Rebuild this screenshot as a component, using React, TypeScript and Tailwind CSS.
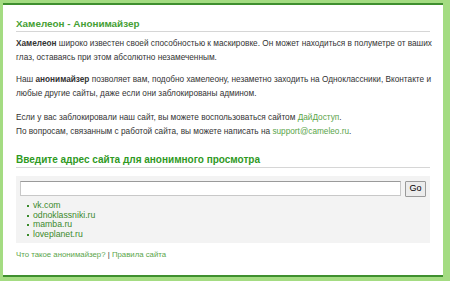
import React from "react";

export default function App() {
  const f = { fontFamily: '"Liberation Sans", Arial, sans-serif' };
  return (
    <div className="w-[450px] h-[281px] bg-[#a4dc82] pt-[3px] pl-[3px] overflow-hidden" style={f}>
      <div className="w-[440px] h-[274px] bg-white border-t-2 border-b-2 border-[#3f8f2f] px-[13px] pt-[12px] text-[#333]">
        <div className="text-[9.9px] leading-[14px] font-bold text-[#45a034] border-b border-[#d6d6d6] whitespace-nowrap">
          Хамелеон - Анонимайзер
        </div>
        <div className="mt-[5px] text-[8.25px] leading-[14px] whitespace-nowrap">
          <div><b>Хамелеон</b> широко известен своей способностью к маскировке. Он может находиться в полуметре от ваших</div>
          <div>глаз, оставаясь при этом абсолютно незамеченным.</div>
        </div>
        <div className="mt-[8px] text-[8.25px] leading-[14px] whitespace-nowrap">
          <div>Наш <b>анонимайзер</b> позволяет вам, подобно хамелеону, незаметно заходить на Одноклассники, Вконтакте и</div>
          <div>любые другие сайты, даже если они заблокированы админом.</div>
        </div>
        <div className="mt-[10px] text-[8.25px] leading-[14px] whitespace-nowrap">
          <div>Если у вас заблокировали наш сайт, вы можете воспользоваться сайтом <span className="text-[#5aa54a]">ДайДоступ</span>.</div>
          <div>По вопросам, связанным с работой сайта, вы можете написать на <span className="text-[#5aa54a]">support@cameleo.ru</span>.</div>
        </div>
        <div className="mt-[14px] text-[10px] leading-[14px] font-bold text-[#2f9a1f] border-b border-[#d6d6d6] whitespace-nowrap">
          Введите адрес сайта для анонимного просмотра
        </div>
        <div className="mt-[8px] bg-[#f3f3f3] px-[4px] pt-[5px] pb-[3px]">
          <div className="flex items-start gap-[4px]">
            <div className="w-[381px] h-[15px] bg-white border border-[#c8c8c8] border-t-[#9a9a9a]"></div>
            <div className="w-[21px] h-[16px] bg-[#ececec] border border-[#9a9a9a] rounded-[1px] flex items-center justify-center text-[9px] text-black">
              Go
            </div>
          </div>
          <ul className="mt-[4px] pl-[7px] text-[8.7px] leading-[9.7px] font-medium text-[#3b8a2b]">
            {["vk.com", "odnoklassniki.ru", "mamba.ru", "loveplanet.ru"].map((s) => (
              <li key={s} className="flex items-center gap-[4px]">
                <span className="w-[2px] h-[2px] bg-[#3b8a2b] inline-block"></span>
                <span>{s}</span>
              </li>
            ))}
          </ul>
        </div>
        <div className="mt-[5px] text-[7.8px] leading-[14px] whitespace-nowrap text-[#5aa54a]">
          Что такое анонимайзер? <span className="text-[#333]">|</span> Правила сайта
        </div>
      </div>
    </div>
  );
}
